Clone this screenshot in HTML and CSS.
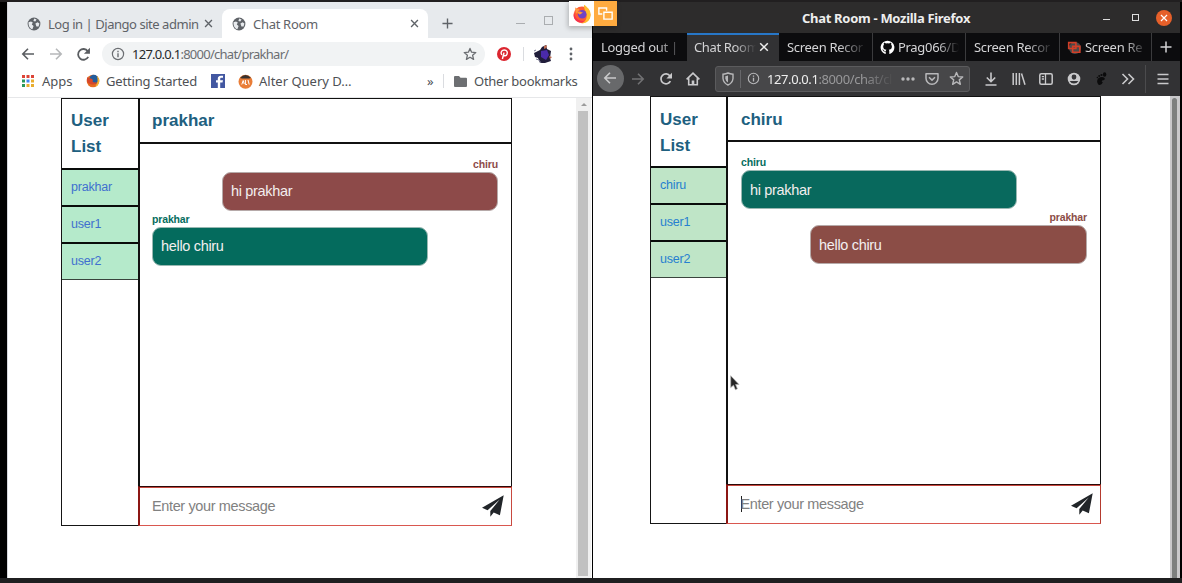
FILE: index.html
```html
<!DOCTYPE html>
<html lang="en">
<head>
<meta charset="utf-8">
<title>Chat Room</title>
<link rel="stylesheet" href="styles.css">
</head>
<body>
<svg width="0" height="0" class="defs">
  <symbol id="globe" viewBox="0 0 14 14"><circle cx="7" cy="7" r="6.4" fill="#5f6368"/><path d="M1.5 5.2 4 4.5 5.8 5.6 4.8 7.6 6.6 9 5.4 12.2C3 11.5 1.4 9.4 1.5 5.2ZM7.2 1.6 9.6 2.4 8.3 4.4 6.4 4ZM8.4 6.4 10.6 5.2 12.4 6.6 11.6 9.6 9.4 9.4Z" fill="#e7eaed"/></symbol>
  <symbol id="info" viewBox="0 0 14 14"><circle cx="7" cy="7" r="5.6" fill="none" stroke="currentColor" stroke-width="1.2"/><path d="M7 6.2V10.2M7 3.8V5.2" stroke="currentColor" stroke-width="1.4"/></symbol>
  <symbol id="star" viewBox="0 0 14 14"><path d="M7 1.4 8.6 5.2 12.8 5.6 9.6 8.3 10.6 12.4 7 10.2 3.4 12.4 4.4 8.3 1.2 5.6 5.4 5.2Z" fill="none" stroke="currentColor" stroke-width="1.3" stroke-linejoin="round"/></symbol>
  <symbol id="back" viewBox="0 0 14 14"><path d="M13 7H2M7 1.8 1.8 7 7 12.2" fill="none" stroke="currentColor" stroke-width="1.6"/></symbol>
  <symbol id="forward" viewBox="0 0 14 14"><path d="M1 7H12M7 1.8 12.2 7 7 12.2" fill="none" stroke="currentColor" stroke-width="1.6"/></symbol>
  <symbol id="reload" viewBox="0 0 14 14"><path d="M11.4 9.2A5 5 0 1 1 11 3.9" fill="none" stroke="currentColor" stroke-width="1.7"/><path d="M13 .8V6.4H7.4Z" fill="currentColor"/></symbol>
  <symbol id="close" viewBox="0 0 10 10"><path d="M1.2 1.2 8.8 8.8M8.8 1.2 1.2 8.8" stroke="currentColor" stroke-width="1.5"/></symbol>
  <symbol id="plus" viewBox="0 0 12 12"><path d="M6 .5V11.5M.5 6H11.5" stroke="currentColor" stroke-width="1.5"/></symbol>
  <symbol id="plane" viewBox="0 0 22 22"><path d="M21.7.3 0 12.8 5.6 15.2 17.7 4.6 8.3 16.1V21.7L11.7 17.6 17.9 20.3Z" fill="#212529"/></symbol>
  <symbol id="firefox" viewBox="0 0 20 20"><circle cx="10" cy="10.8" r="8.4" fill="#ff5b34"/><path d="M12 .8C15 3 19 6 18.6 11.5C18.2 16.5 14.4 19.3 10 19.3C15 17 15.4 12 13.8 8.6C13.4 6 11.4 4 12 .8Z" fill="#ffbd2e"/><path d="M3 3.2C4.4 5 6.4 4.4 7.6 5.2L4 10Z" fill="#ff9640"/><path d="M2 8C3 15 7 17.5 13 16.8C8 20.5 2 17 1.6 12Z" fill="#f5304f"/><circle cx="10.2" cy="10.2" r="4.3" fill="#7043c4"/><path d="M5 8.2C7 6.6 9 7.8 11 8.6C9.6 9.2 9 10.6 7.4 10.6Z" fill="#ff9a35"/></symbol>
</svg>

<div class="desktop">
  <section class="chrome">
    <div class="c-tabs">
      <div class="c-tab"><svg class="i14"><use href="#globe"/></svg><span class="t-login">Log in | Django site admin</span><svg class="i9"><use href="#close"/></svg></div>
      <div class="c-tab active"><svg class="i14"><use href="#globe"/></svg><span class="t-room">Chat Room</span><svg class="i9"><use href="#close"/></svg></div>
      <svg class="c-plus"><use href="#plus"/></svg>
      <i class="c-min"></i><i class="c-max"></i>
    </div>
    <div class="c-bar">
      <svg class="i14 c-back"><use href="#back"/></svg>
      <svg class="i14 c-fwd"><use href="#forward"/></svg>
      <svg class="c-reload"><use href="#reload"/></svg>
      <div class="c-url"><svg class="i14"><use href="#info"/></svg><span class="c-addr"><b>127.0.0.1</b>:8000/chat/prakhar/</span><svg class="i14 c-star"><use href="#star"/></svg></div>
      <svg class="c-pin" viewBox="0 0 14 14"><circle cx="7" cy="7" r="7" fill="#db2630"/><path d="M5.4 12 7 5.6M4.8 8C2.8 4.8 5.2 3 7.3 3C10 3 10.8 5.2 10 7.2C9.2 9.2 7.2 9.2 6.6 8" fill="none" stroke="#fff" stroke-width="1.4"/></svg>
      <i class="c-sep"></i>
      <svg class="c-avatar" viewBox="0 0 20 20"><path d="M1 9 7 6 9 3 13 1 14 5 18 7 17 14 18 17 12 19H7L5 14 2 13Z" fill="#201d3a"/><path d="M8 7 14 6 16 11 13 16 8 13Z" fill="#4a2aaa"/><path d="M11 2 14 1 13.5 4 11 5ZM16 12 19 13 17 15Z" fill="#bd6c52"/><path d="M3 15 6 16 8 19M1 7 3 6" stroke="#7b7a93" fill="none"/></svg>
      <svg class="c-menu" viewBox="0 0 4 14"><g fill="#5f6368"><circle cx="2" cy="2" r="1.4"/><circle cx="2" cy="7" r="1.4"/><circle cx="2" cy="12" r="1.4"/></g></svg>
    </div>
    <div class="c-marks">
      <svg class="c-apps" viewBox="0 0 12 12"><path d="M0 0h3v3H0zM4.5 0h3v3h-3zM9 0h3v3H9z" fill="#dc4437"/><path d="M0 4.5h3v3H0z" fill="#29985a"/><path d="M4.5 4.5h3v3h-3z" fill="#4285f4"/><path d="M9 4.5h3v3H9zM4.5 9h3v3h-3zM9 9h3v3H9z" fill="#e9ad2d"/><path d="M0 9h3v3H0z" fill="#29985a"/></svg>
      <span class="m-apps">Apps</span>
      <svg class="c-ff" viewBox="0 0 14 14"><circle cx="7" cy="7" r="6.3" fill="#e66a20"/><circle cx="7.8" cy="5.4" r="4.6" fill="#235d9c"/><path d="M1 3C3 5 5 3.6 7 6C5.4 8 8 9 11 8C9 12 2 11 1 7Z" fill="#d6472a"/><path d="M11 2C14.5 5 14 11 9 13C12 9 12 6 11 2Z" fill="#f4b52e"/></svg>
      <span class="m-get">Getting Started</span>
      <svg class="c-fb" viewBox="0 0 14 14"><path d="M0 0H14V14H0Z" fill="#4257a1"/><path d="M9.2 14V8.6H11.5L12 6.3H9.2V5C9.2 4.2 9.5 3.8 10.5 3.8H12V1.7H10C7.6 1.7 6.8 3 6.8 4.8V6.3H5V8.6H6.8V14Z" fill="#fff"/></svg>
      <svg class="c-alt" viewBox="0 0 15 15"><circle cx="7.5" cy="7.8" r="7" fill="#e97d37"/><path d="M2 4Q7.5-2 13 4L11 4.6H4Z" fill="#38322f"/><path d="M3.8 10.5 5.2 6.5 6.2 10M7.4 6V10.5H9M10 6 11.2 10.5" fill="none" stroke="#fff"/></svg>
      <span class="m-alt">Alter Query D…</span>
      <span class="m-more">»</span><i class="c-sep m-sep"></i>
      <svg class="c-folder" viewBox="0 0 13 11"><path d="M0 1Q0 0 1 0H5L6.5 1.8H12Q13 1.8 13 2.8V10Q13 11 12 11H1Q0 11 0 10Z" fill="#6d6f72"/></svg>
      <span class="m-other">Other bookmarks</span>
    </div>
    <div class="c-view">
      <div class="chat">
        <aside class="side">
          <h2>User<br>List</h2>
          <a>prakhar</a><a>user1</a><a>user2</a>
        </aside>
        <main class="room">
          <h3>prakhar</h3>
          <div class="log">
            <div class="msg right"><small>chiru</small><p>hi prakhar</p></div>
            <div class="msg left"><small>prakhar</small><p>hello chiru</p></div>
          </div>
          <div class="entry"><span>Enter your message</span><svg class="send"><use href="#plane"/></svg></div>
        </main>
      </div>
      <div class="c-scroll"><i></i><b></b></div>
    </div>
  </section>

  <section class="fox">
    <div class="f-title"><span>Chat Room - Mozilla Firefox</span><i class="f-min"></i><i class="f-max"></i><b class="f-close"><svg viewBox="0 0 10 10"><use href="#close"/></svg></b></div>
    <div class="f-tabs">
      <div class="f-tab w1"><span>Logged out |</span></div>
      <div class="f-tab w2 on"><span>Chat Room</span><svg class="f-x"><use href="#close"/></svg></div>
      <div class="f-tab w3"><span>Screen Recor</span></div>
      <div class="f-tab w4"><svg class="f-ico" viewBox="0 0 16 16"><path fill="#fff" d="M8 .8a7.2 7.2 0 0 0-2.5 14c.5.1.6-.2.6-.5v-2c-2.1.4-2.6-.6-2.8-1.1-.3-.6-.7-.9-.9-1.1.9-.2 1.5.4 1.8 1 .5.7 1.2.7 2 .5.1-.5.3-.9.6-1.1-2-.2-3.4-1-3.4-3.5 0-.8.3-1.5.8-2-.1-.3-.3-1.1.1-2 1 0 1.6.5 2 .8a7 7 0 0 1 3.5 0c.4-.3 1-.8 2-.8.4.9.2 1.7.1 2 .5.5.8 1.2.8 2 0 2.5-1.5 3.3-3.4 3.5.3.3.6.8.6 1.5v2.3c0 .3.1.6.6.5A7.2 7.2 0 0 0 8 .8Z"/></svg><span>Prag066/D</span></div>
      <div class="f-tab w5"><span>Screen Recor</span></div>
      <div class="f-tab w6"><svg class="f-ico" viewBox="0 0 16 16"><circle cx="8.5" cy="8.5" r="6.5" fill="#4a4a4a"/><path d="M1.8 2.8h7.7v6.2H1.8zM6 6.8h7.7v6.2H6z" fill="none" stroke="#d23f28" stroke-width="1.7"/></svg><span>Screen Re</span></div>
      <svg class="f-plus"><use href="#plus"/></svg>
    </div>
    <div class="f-bar">
      <b class="f-back"><svg class="i14"><use href="#back"/></svg></b>
      <svg class="i14 f-fwd"><use href="#forward"/></svg>
      <svg class="i14 f-rel"><use href="#reload"/></svg>
      <svg class="i14 f-home" viewBox="0 0 14 14"><path d="M.6 7.4 7 1.2 13.4 7.4M2.7 6.3V12.8H11.3V6.3" fill="none" stroke="currentColor" stroke-width="1.6"/><path d="M5.7 8.5H8.3V12H5.7Z" fill="currentColor"/></svg>
      <div class="f-url">
        <svg class="f-shield" viewBox="0 0 12 14"><path d="M1 2.2Q4 2 6 1Q8 2 11 2.2V6.5Q10.5 11 6 13Q1.5 11 1 6.5Z" fill="none" stroke="currentColor" stroke-width="1.4"/><path d="M6 3.5V10.5Q3.5 9 3.3 6.2V4.2Z" fill="currentColor"/></svg>
        <i class="f-usep"></i>
        <svg class="i14 f-info"><use href="#info"/></svg>
        <span class="f-addr"><b>127.0.0.1</b>:8000/chat/cl</span>
        <svg class="f-dots" viewBox="0 0 14 4"><g fill="currentColor"><circle cx="2" cy="2" r="1.7"/><circle cx="7" cy="2" r="1.7"/><circle cx="12" cy="2" r="1.7"/></g></svg>
        <svg class="i14 f-pocket" viewBox="0 0 14 14"><path d="M1 1.7H13V6.2A6 6 0 0 1 1 6.2ZM4 5.3 7 8.1 10 5.3" fill="none" stroke="currentColor" stroke-width="1.5" stroke-linejoin="round"/></svg>
        <svg class="f-star"><use href="#star"/></svg>
      </div>
      <svg class="i14 f-down" viewBox="0 0 14 14"><path d="M7 .5V9.5M2.8 5.5 7 9.7 11.2 5.5M1.5 13H12.5" fill="none" stroke="currentColor" stroke-width="1.6"/></svg>
      <svg class="i14 f-lib" viewBox="0 0 14 14"><path d="M1.2 1V13M4.3 1V13M7.4 1V13M9.5 1.5 13 12.8" fill="none" stroke="currentColor" stroke-width="1.5"/></svg>
      <svg class="i14 f-side" viewBox="0 0 14 14"><rect x=".8" y="1.7" width="12.4" height="10.6" rx="1.5" fill="none" stroke="currentColor" stroke-width="1.5"/><path d="M6.5 2V12M2.8 4.7H5M2.8 7H5" fill="none" stroke="currentColor" stroke-width="1.3"/></svg>
      <svg class="i14 f-user" viewBox="0 0 14 14"><circle cx="7" cy="7" r="6.3" fill="currentColor"/><path d="M4.6 5A2.4 2.4 0 0 1 9.4 5Q9.2 7.5 7 7.7Q4.8 7.5 4.6 5ZM2.6 9H11.4Q9.8 11.6 7 11.6Q4.2 11.6 2.6 9Z" fill="#353538"/></svg>
      <svg class="i14 f-foot" viewBox="0 0 14 14"><path d="M4 6.5Q8 3.8 10.6 6Q11.4 8 8.2 8.6Q6.8 9.3 8.8 10.6Q7.6 13.5 4.5 12.8Q2 10 4 6.5Z" fill="#0b0b0c"/><g fill="#0b0b0c"><ellipse cx="10.6" cy="2.5" rx="1.7" ry="2.2"/><circle cx="7.5" cy="3" r="1.1"/><circle cx="5.2" cy="4" r="1"/><circle cx="3.4" cy="5.5" r=".8"/></g></svg>
      <svg class="i14 f-over" viewBox="0 0 14 14"><path d="M1.5 2 6.5 7 1.5 12M7.5 2 12.5 7 7.5 12" fill="none" stroke="currentColor" stroke-width="1.6"/></svg>
      <i class="f-sep"></i>
      <svg class="f-menu" viewBox="0 0 12 12"><path d="M.5 1.5H11.5M.5 6H11.5M.5 10.5H11.5" stroke="currentColor" stroke-width="1.5"/></svg>
    </div>
    <div class="f-view">
      <div class="chat">
        <aside class="side">
          <h2>User<br>List</h2>
          <a>chiru</a><a>user1</a><a>user2</a>
        </aside>
        <main class="room">
          <h3>chiru</h3>
          <div class="log">
            <div class="msg left"><small>chiru</small><p>hi prakhar</p></div>
            <div class="msg right"><small>prakhar</small><p>hello chiru</p></div>
          </div>
          <div class="entry caret"><span>Enter your message</span><svg class="send"><use href="#plane"/></svg></div>
        </main>
      </div>
      <div class="f-scroll"><i></i></div>
    </div>
  </section>

  <div class="switcher">
    <b><svg viewBox="0 0 20 20"><use href="#firefox"/></svg></b>
    <i><svg viewBox="0 0 14 12"><path d="M4 6.5H.8V.8H8V3.5M5.5 4.8H13.2V11.2H5.5Z" fill="none" stroke="#fff" stroke-width="1.3"/></svg></i>
  </div>
  <svg class="pointer" viewBox="0 0 10 16"><path d="M.7.7V12.6L3.5 10.2 5.4 14.7 7.4 13.8 5.6 9.5H9Z" fill="#252525" stroke="#b5b5b5" stroke-width=".7"/></svg>
</div>
</body>
</html>
```

FILE: styles.css
```css
* { box-sizing: border-box; }
body { margin: 0; background: #000; font-family: "Noto Sans", "Open Sans", sans-serif; }
svg { display: block; flex: none; }
.defs { position: absolute; }
i, b { flex: none; }
span { white-space: nowrap; flex: none; }
.i14 { width: 14px; height: 14px; }
.i9 { width: 9px; height: 9px; }

.desktop {
  position: relative;
  width: 1182px;
  height: 583px;
  overflow: hidden;
  display: grid;
  grid-template-columns: 585px 1px 587px;
  justify-content: start;
  padding: 2px 0 5px 7px;
  background: linear-gradient(#211f20 2px, #000 2px, #000 578px, #1f1f20 578px);
}

/* Left browser window */
.chrome {
  display: flex;
  flex-direction: column;
  height: 576px;
  background: #fff;
  border-left: 1px solid #d6d7dc;
}
.c-tabs {
  display: flex;
  height: 36px;
  padding: 7px 0 0 4px;
  background: #e7eaed;
  color: #5f6368;
  font-size: 13px;
}
.c-tab { display: flex; align-items: center; width: 210px; height: 29px; padding-left: 15px; }
.c-tab.active { width: 206px; padding-left: 10px; background: #fff; border-radius: 8px 8px 0 0; }
.c-tab span { margin-left: 7px; }
.t-login { width: 156px; letter-spacing: -.46px; }
.t-room { width: 157px; letter-spacing: -.3px; }
.c-plus { width: 11px; height: 11px; margin: 9px 0 0 14px; }
.c-min { width: 9px; height: 1px; margin: 14px 0 0 63px; background: #aaadb0; }
.c-max { width: 9px; height: 9px; margin: 7px 0 0 19px; border: 1px solid #aaadb0; }

.c-bar { display: flex; align-items: center; height: 32px; padding-left: 13px; color: #5a5d61; }
.c-fwd { margin-left: 14px; color: #b6b8ba; }
.c-reload { width: 15px; height: 15px; margin-left: 13px; }
.c-url {
  display: flex;
  align-items: center;
  width: 383px;
  height: 24px;
  margin-left: 11px;
  padding-left: 9px;
  border-radius: 12px;
  background: #f1f3f4;
  font-size: 13px;
  color: #6b6e72;
}
.c-addr { width: 331px; margin-left: 7px; letter-spacing: -.74px; }
.c-addr b { font-weight: 400; color: #26282b; }
.c-pin { width: 14px; height: 14px; margin-left: 12px; }
.c-sep { width: 1px; height: 14px; margin-left: 12px; background: #dadce0; }
.c-avatar { width: 20px; height: 20px; margin-left: 9px; }
.c-menu { width: 4px; height: 14px; margin-left: 16px; }

.c-marks { display: flex; align-items: center; height: 28px; padding: 0 0 5px 14px; border-bottom: 1px solid #e6e7e9; font-size: 13px; color: #4e5155; }
.c-apps { width: 12px; height: 12px; }
.m-apps { width: 44px; margin-left: 8px; }
.c-ff { width: 14px; height: 14px; }
.m-get { width: 98px; margin-left: 6px; letter-spacing: -.16px; }
.c-fb { width: 14px; height: 14px; margin-left: 7px; }
.c-alt { width: 15px; height: 15px; margin-left: 13px; }
.m-alt { width: 155px; margin-left: 6px; }
.m-more { width: 8px; margin-left: 13px; }
.m-sep { margin-left: 8px; }
.c-folder { width: 13px; height: 11px; margin-left: 10px; }
.m-other { margin-left: 7px; letter-spacing: -.27px; }

.c-view { display: flex; justify-content: space-between; height: 480px; padding-left: 53px; }
.c-scroll { width: 15px; background: #f0f0f0; padding: 5px 2px 2px; display: flex; flex-direction: column; align-items: center; margin-right: 1px; }
.c-scroll i { width: 0; height: 3px; border: 3px solid transparent; border-top: 0; border-bottom: 3px solid #9b9b9b; }
.c-scroll b { width: 10px; height: 465px; margin: 5px 1px 0 0; background: #c1c1c1; }

/* Chat page */
.chat { display: flex; width: 451px; height: 428px; font-family: "Liberation Sans", Arial, sans-serif; }
.side { width: 77px; border: 1px solid #151515; border-right: 0; }
.side h2 { height: 69px; margin: 0; padding: 9px 0 0 9px; font-size: 17px; line-height: 26px; color: #20607f; }
.side a {
  display: flex;
  align-items: center;
  height: 37px;
  padding: 0 0 1px 9px;
  background: #b5eacb;
  border-top: 2px solid #090c0a;
  font-size: 12.5px;
  letter-spacing: -.2px;
  color: #3f70cf;
}
.side a:last-child { height: 38px; border-bottom: 1px solid #39443d; }
.room { display: flex; flex-direction: column; width: 374px; }
.room h3 { height: 46px; margin: 0; padding: 9px 12px; border: 1px solid #111; border-width: 1px 1px 2px 2px; font-size: 17px; line-height: 26px; color: #20607f; }
.log { height: 342px; padding: 14px 13px 0 12px; border: solid #111; border-width: 0 1px 0 2px; }
.msg { display: flex; flex-direction: column; width: 276px; }
.msg.right { margin-left: auto; align-items: flex-end; color: #8d4b4a; }
.msg.left { color: #056d5e; }
.msg small { height: 14px; font-size: 10.5px; line-height: 13px; font-weight: 700; letter-spacing: -.15px; }
.msg p {
  width: 276px;
  height: 39px;
  margin: 0 0 2px;
  padding-left: 8px;
  border: 1px solid #b6aaa9;
  border-radius: 9px;
  font-size: 14.5px;
  letter-spacing: -.32px;
  line-height: 37px;
  color: #f3eeee;
  background: #8d4a49;
}
.msg.left p { background: #046b5d; border-color: #99b8b2; }
.entry {
  display: flex;
  align-items: center;
  height: 40px;
  padding: 0 7px 0 12px;
  border-style: solid;
  border-width: 1px 1px 1px 2px;
  border-color: #2b0908 #c8493f #d9574f #8c1714;
  box-shadow: inset 0 1px #c8493f;
  font-size: 14.5px;
  letter-spacing: -.37px;
  color: #818181;
}
.entry span { width: 330px; }
.send { width: 22px; height: 22px; }

/* Right browser window */
.fox { grid-column: 3; display: flex; flex-direction: column; height: 576px; background: #fff; color: #d4d4d6; }
.f-title { display: flex; align-items: center; height: 31px; background: #2d2c2c; color: #eee; font-size: 13px; font-weight: 700; }
.f-title span { width: 301px; margin-left: 209px; letter-spacing: -.3px; }
.f-min { width: 7px; height: 1px; margin-top: 4px; background: #ddd; }
.f-max { width: 7px; height: 7px; margin-left: 22px; border: 1px solid #ddd; }
.f-close { width: 16px; height: 16px; margin-left: 17px; padding: 4px; border-radius: 50%; background: #e6602a; color: #fff; }
.f-close svg { width: 8px; height: 8px; }
.f-tabs { display: flex; height: 28px; background: #0c0c0e; }
.f-tab { display: flex; align-items: center; height: 28px; padding-left: 8px; font-size: 13px; }
.f-tab span { -webkit-mask-image: linear-gradient(to right, #000 65%, transparent); mask-image: linear-gradient(to right, #000 65%, transparent); letter-spacing: -.3px; }
.w1 { width: 94px; }
.w1 span { width: 85px; }
.w2 { width: 92px; }
.f-tab.w2 { padding-left: 7px; }
.f-tab.w2 span { width: 62px; letter-spacing: -.35px; }
.w3 { width: 94px; border-right: 1px solid #3b3b3d; }
.w3 span, .w5 span { width: 80px; }
.w4 { width: 93px; border-right: 1px solid #3b3b3d; }
.w4 span { width: 61px; }
.w5 { width: 94px; border-right: 1px solid #3b3b3d; }
.w6 { width: 92px; border-right: 1px solid #3b3b3d; }
.w6 span { width: 62px; }
.f-tab.on { background: #323234; box-shadow: inset 0 2px #2777c8; }
.f-x { width: 10px; height: 10px; margin-left: 3px; color: #eee; }
.f-ico { width: 15px; height: 15px; margin-right: 3px; }
.f-tab.w4, .f-tab.w6 { padding-left: 7px; }
.f-plus { width: 12px; height: 12px; margin: 8px 0 0 8px; }
.f-bar { display: flex; align-items: center; height: 35px; background: #323234; color: #c9c9cb; }
.f-back { width: 27px; height: 27px; margin-left: 4px; padding: 6px; border-radius: 50%; background: #68696b; }
.f-fwd { margin-left: 7px; color: #717173; }
.f-rel { margin-left: 14px; }
.f-home { margin-left: 13px; }
.f-url { display: flex; align-items: center; width: 255px; height: 26px; margin-left: 15px; padding-left: 6px; border: 1px solid #5b5b5d; border-radius: 3px; background: #474749; color: #b8b8ba; }
.f-shield { width: 12px; height: 14px; }
.f-usep { width: 1px; height: 18px; margin-left: 6px; background: #67676a; }
.f-info { margin-left: 6px; width: 13px; height: 13px; }
.f-addr { width: 127px; margin-left: 7px; font-size: 13px; letter-spacing: -.4px; color: #98989a; -webkit-mask-image: linear-gradient(to right, #000 75%, transparent); mask-image: linear-gradient(to right, #000 75%, transparent); }
.f-addr b { font-weight: 400; color: #eee; }
.f-dots { width: 14px; height: 4px; margin-left: 7px; }
.f-pocket { margin-left: 10px; }
.f-star { width: 15px; height: 15px; margin-left: 10px; }
.f-down { margin-left: 14px; }
.f-lib, .f-side, .f-user, .f-foot, .f-over { margin-left: 13.5px; }
.f-over { margin-left: 12.5px; }
.f-sep { width: 1px; height: 28px; margin-left: 10px; background: #4b4b4d; }
.f-menu { width: 12px; height: 12px; margin-left: 11px; }
.f-view { display: flex; justify-content: space-between; height: 482px; padding-left: 57px; }
.f-view .side { width: 76px; }
.f-view .side a { background: #bfe5c7; color: #2680d0; }
.f-view .room { width: 375px; }
.f-view .side h2 { padding-top: 10px; }
.f-view .room h3 { padding: 10px 12px 8px 13px; }
.f-view .log { padding-left: 13px; }
.f-view .entry { padding-left: 12.5px; }
.f-view .msg p { line-height: 38px; }
.f-view .msg.left p { background: #08695d; }
.f-view .msg.right { color: #8b4d46; width: 277px; }
.f-view .msg.right p { width: 277px; background: #8b4d46; }
.f-view .entry { border-color: #2b0908 #b43a2e #d9574f #8c1714; }
.caret span { background: linear-gradient(#222, #222) left center / 1px 16px no-repeat; }
.f-scroll { width: 10px; padding: 2px 3px 0 2px; background: #c9c9cb; }
.f-scroll i { display: block; width: 5px; height: 480px; border-radius: 3px 3px 0 0; background: #7d807f; }

/* Overlays on the window edge */
.switcher { position: absolute; left: 569px; top: 1px; display: flex; box-shadow: -1px 2px 5px rgba(0, 0, 0, .25); }
.switcher b { width: 25px; height: 25px; padding: 3px; background: #fff; }
.switcher b svg { width: 20px; height: 20px; }
.switcher i { width: 23px; height: 25px; padding: 6px 4px; background: #ffab40; }
.switcher i svg { width: 15px; height: 13px; }
.pointer { position: absolute; left: 730px; top: 375px; width: 10px; height: 16px; }
```
